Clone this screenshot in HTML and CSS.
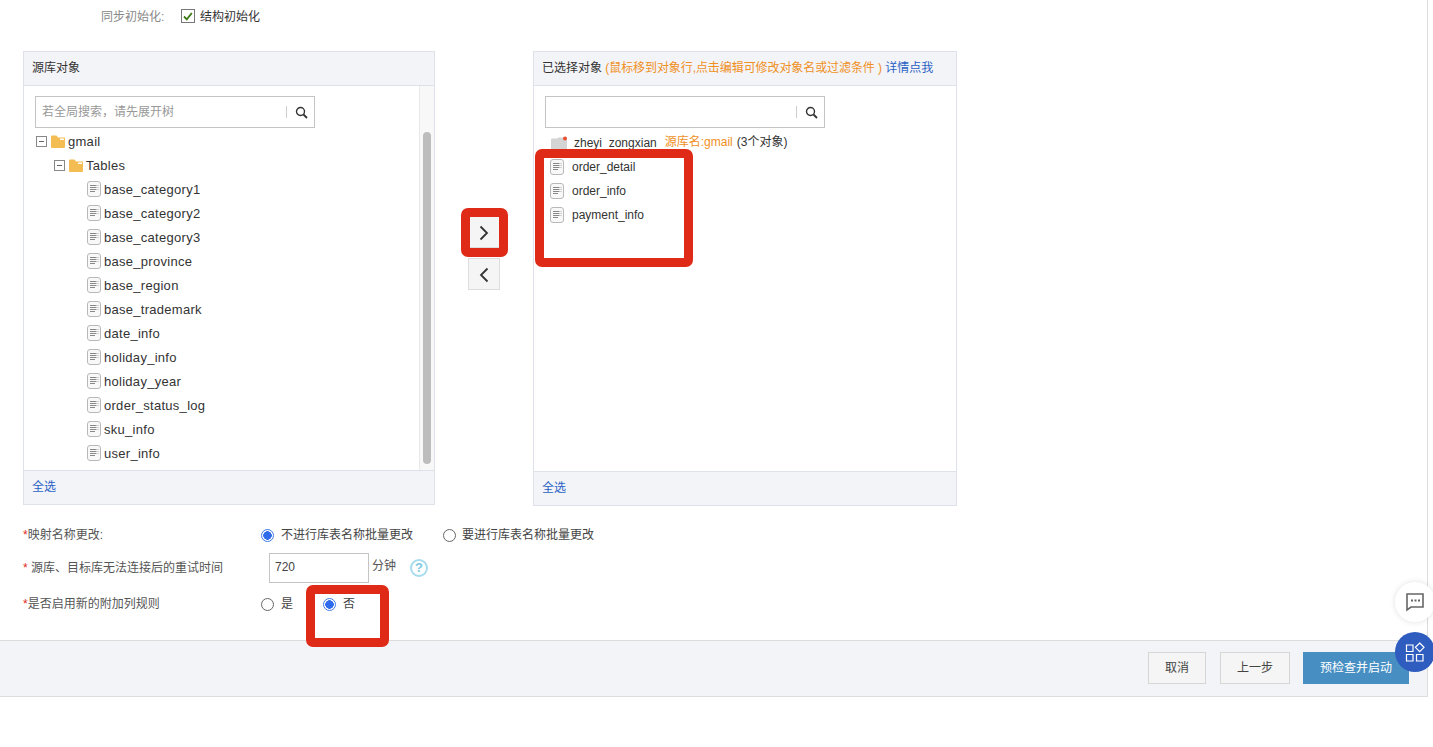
FILE: index.html
```html
<!DOCTYPE html>
<html lang="zh-CN">
<head>
  <meta charset="UTF-8">
  <title>同步任务配置</title>
  <link rel="stylesheet" href="styles.css">
</head>
<body>

  <svg class="defs" width="0" height="0">
    <symbol id="i-file" viewBox="0 0 14 16">
      <rect x="0.5" y="0.5" width="13" height="15" rx="2.5" fill="#f8f8f8" stroke="#b8b8b8"/>
      <path d="M3 4.500h6.500M3 6.500h6.500M3 8.500h6.500M3 10.500h5" stroke="#888" stroke-width="1" fill="none"/>
      <path d="M10.500 4.500h1M10.500 6.500h1M10.500 8.500h1" stroke="#aaa" stroke-width="1" fill="none"/>
    </symbol>
    <symbol id="i-folder" viewBox="0 0 14 13">
      <path d="M0 1.500q0-1 1-1h4.500l1.500 2h7v9.500q0 1-1 1h-12q-1 0-1-1z" fill="#f3bd54"/>
      <path d="M9 3.500h4v1.500h-4z" fill="#fff"/>
    </symbol>
    <symbol id="i-search" viewBox="0 0 13 13">
      <circle cx="5.500" cy="5.500" r="4" fill="none" stroke="#333" stroke-width="1.400"/>
      <path d="M8.500 8.500l3.500 3.500" stroke="#333" stroke-width="1.800" fill="none"/>
    </symbol>
  </svg>

  <div class="page">
    <div class="init-row">
      <span class="init-label">同步初始化:</span>
      <span class="checkbox">
        <svg width="12" height="12" viewBox="0 0 12 12"><path d="M2 6.500l2.800 2.800 5-6.300" fill="none" stroke="#3c7a12" stroke-width="1.800"/></svg>
      </span>
      <span class="init-text">结构初始化</span>
    </div>

    <div class="transfer">
      <div class="panel panel-left">
        <div class="panel-head">源库对象</div>
        <div class="panel-body">
          <div class="tree-wrap">
            <div class="search">
              <span class="search-text">若全局搜索，请先展开树</span>
              <span class="search-btn"><svg width="13" height="13"><use href="#i-search"/></svg></span>
            </div>
            <div class="tree">
              <div class="row lvl-1"><span class="toggle"></span><svg class="folder" width="14" height="13"><use href="#i-folder"/></svg>gmail</div>
              <div class="row lvl-2"><span class="toggle"></span><svg class="folder" width="14" height="13"><use href="#i-folder"/></svg>Tables</div>
              <div class="row lvl-3"><svg class="file" width="14" height="16"><use href="#i-file"/></svg>base_category1</div>
              <div class="row lvl-3"><svg class="file" width="14" height="16"><use href="#i-file"/></svg>base_category2</div>
              <div class="row lvl-3"><svg class="file" width="14" height="16"><use href="#i-file"/></svg>base_category3</div>
              <div class="row lvl-3"><svg class="file" width="14" height="16"><use href="#i-file"/></svg>base_province</div>
              <div class="row lvl-3"><svg class="file" width="14" height="16"><use href="#i-file"/></svg>base_region</div>
              <div class="row lvl-3"><svg class="file" width="14" height="16"><use href="#i-file"/></svg>base_trademark</div>
              <div class="row lvl-3"><svg class="file" width="14" height="16"><use href="#i-file"/></svg>date_info</div>
              <div class="row lvl-3"><svg class="file" width="14" height="16"><use href="#i-file"/></svg>holiday_info</div>
              <div class="row lvl-3"><svg class="file" width="14" height="16"><use href="#i-file"/></svg>holiday_year</div>
              <div class="row lvl-3"><svg class="file" width="14" height="16"><use href="#i-file"/></svg>order_status_log</div>
              <div class="row lvl-3"><svg class="file" width="14" height="16"><use href="#i-file"/></svg>sku_info</div>
              <div class="row lvl-3"><svg class="file" width="14" height="16"><use href="#i-file"/></svg>user_info</div>
            </div>
          </div>
          <div class="scroll-track"><div class="scroll-thumb"></div></div>
        </div>
        <div class="panel-foot"><a href="#">全选</a></div>
      </div>

      <div class="move-btns">
        <button class="move-btn" type="button">
          <svg width="10" height="16" viewBox="0 0 10 16"><path d="M1.500 1.500l6.500 6.500-6.500 6.500" fill="none" stroke="#333" stroke-width="1.800"/></svg>
        </button>
        <button class="move-btn" type="button">
          <svg width="10" height="16" viewBox="0 0 10 16"><path d="M8.500 1.500l-6.500 6.500 6.500 6.500" fill="none" stroke="#333" stroke-width="1.800"/></svg>
        </button>
      </div>

      <div class="panel panel-right">
        <div class="panel-head">已选择对象 <span class="orange head-note">(鼠标移到对象行,点击编辑可修改对象名或过滤条件 )</span> <a href="#">详情点我</a></div>
        <div class="panel-body picked">
          <div class="search">
            <span class="search-text"></span>
            <span class="search-btn"><svg width="13" height="13"><use href="#i-search"/></svg></span>
          </div>
          <div class="picked-list">
            <div class="picked-row picked-db">
              <svg class="db-folder" width="17" height="14" viewBox="0 0 17 14">
                <path d="M0 3.500q0-1 1-1h5l1.500-1h8.500v11q0 1-1 1h-14q-1 0-1-1z" fill="#d4d4d4"/>
                <circle cx="14" cy="2.500" r="2" fill="#e8502f"/>
              </svg>
              <span class="db-name">zheyi_zongxian</span>
              <span class="orange">源库名:gmail</span>
              <span class="db-count">(3个对象)</span>
            </div>
            <div class="picked-row"><svg class="file" width="14" height="16"><use href="#i-file"/></svg>order_detail</div>
            <div class="picked-row"><svg class="file" width="14" height="16"><use href="#i-file"/></svg>order_info</div>
            <div class="picked-row"><svg class="file" width="14" height="16"><use href="#i-file"/></svg>payment_info</div>
          </div>
        </div>
        <div class="panel-foot"><a href="#">全选</a></div>
      </div>
    </div>

    <div class="options">
      <div class="opt-row opt-map">
        <label class="opt-label"><i>*</i>映射名称更改:</label>
        <label class="radio radio-a"><input type="radio" name="rename" checked>不进行库表名称批量更改</label>
        <label class="radio radio-b"><input type="radio" name="rename">要进行库表名称批量更改</label>
      </div>
      <div class="opt-row opt-retry">
        <label class="opt-label"><i>*</i> 源库、目标库无法连接后的重试时间</label>
        <input class="retry-input" type="text" value="720">
        <span class="unit">分钟</span>
        <span class="help">?</span>
      </div>
      <div class="opt-row opt-extra">
        <label class="opt-label"><i>*</i>是否启用新的附加列规则</label>
        <label class="radio radio-yes"><input type="radio" name="extra">是</label>
        <label class="radio"><input type="radio" name="extra" checked>否</label>
      </div>
    </div>

    <div class="footer">
      <button class="btn" type="button">取消</button>
      <button class="btn btn-prev" type="button">上一步</button>
      <button class="btn btn-primary" type="button">预检查并启动</button>
    </div>

    <div class="mark mark-btn"></div>
    <div class="mark mark-list"></div>
    <div class="mark mark-radio"></div>
  </div>

  <div class="float float-chat">
    <svg width="20" height="20" viewBox="0 0 20 20">
      <path d="M2 2h16v13h-12l-4 3z" fill="none" stroke="#666" stroke-width="1.600"/>
      <path d="M6 8.500h2M9.500 8.500h2M13 8.500h2" stroke="#666" stroke-width="2" fill="none"/>
    </svg>
  </div>
  <div class="float float-apps">
    <svg width="20" height="20" viewBox="0 0 20 20">
      <path d="M1.500 3h6.500v6.500h-6.500zM1.500 12.500h6.500v6.500h-6.500zM11.500 12.500h6.500v6.500h-6.500zM14.700 1l4.300 4.300-4.300 4.300-4.300-4.300z" fill="none" stroke="#fff" stroke-width="1.200"/>
    </svg>
  </div>

</body>
</html>
```

FILE: styles.css
```css
* {
  box-sizing: border-box;
}
body {
  margin: 0;
  background: #fff;
  color: #333;
  font-family: "Liberation Sans", "Noto Sans CJK SC", sans-serif;
  font-size: 12px;
  overflow: hidden;
}
a {
  color: #2a62c4;
  text-decoration: none;
}
.defs {
  position: absolute;
}
.page {
  position: relative;
  width: 1428px;
  height: 697px;
  border-right: 1px solid #ddd;
}

.init-row {
  height: 51px;
  padding: 9px 0 0 101px;
  display: flex;
  align-items: flex-start;
}
.init-label {
  width: 80px;
  line-height: 17px;
  color: #888;
}
.init-text {
  margin-left: 5px;
  line-height: 17px;
}
.checkbox {
  width: 14px;
  height: 14px;
  border: 1px solid #777;
  display: flex;
  align-items: center;
  justify-content: center;
}

.transfer {
  display: flex;
  align-items: flex-start;
  padding-left: 23px;
}
.panel {
  border: 1px solid #dfe1ea;
  display: flex;
  flex-direction: column;
}
.panel-left {
  width: 412px;
  height: 454px;
}
.panel-right {
  width: 424px;
  height: 455px;
}
.panel-head {
  height: 34px;
  line-height: 32px;
  padding-left: 8px;
  background: #f3f4f8;
  border-bottom: 1px solid #dfe1ea;
  white-space: nowrap;
}
.head-note {
  letter-spacing: -.08px;
}
.panel-body {
  flex: 1;
  display: flex;
  min-height: 0;
}
.panel-foot {
  height: 34px;
  line-height: 32px;
  padding-left: 8px;
  background: #f3f4f8;
  border-top: 1px solid #dfe1ea;
}
.tree-wrap {
  flex: 1;
  padding: 10px 0 0 11px;
}
.scroll-track {
  width: 15px;
  background: #f8f8f8;
  border-left: 1px solid #e8e8e8;
  padding: 46px 0 0 3px;
}
.scroll-thumb {
  width: 8px;
  height: 332px;
  border-radius: 4px;
  background: #bdbdbd;
}

.search {
  width: 280px;
  height: 32px;
  border: 1px solid #c4c4c4;
  display: flex;
  align-items: center;
}
.search-text {
  flex: 1;
  padding: 0 0 4px 6px;
  color: #999;
}
.search-btn {
  width: 28px;
  height: 12px;
  border-left: 1px solid #ccc;
  display: flex;
  align-items: center;
  padding-left: 8px;
}
.picked {
  display: block;
  padding: 10px 0 0 11px;
}

.tree {
  margin-top: 1px;
}
.row {
  height: 24px;
  display: flex;
  align-items: center;
  font-size: 13px;
  letter-spacing: .28px;
}
.lvl-1 {
  padding-left: 1px;
}
.lvl-2 {
  padding-left: 19px;
}
.lvl-3 {
  padding-left: 52px;
}
.toggle {
  position: relative;
  width: 11px;
  height: 11px;
  border: 1px solid #888;
  margin-right: 4px;
}
.toggle::after {
  content: "";
  position: absolute;
  left: 2px;
  top: 4px;
  width: 5px;
  height: 1px;
  background: #666;
}
.folder {
  margin-right: 3px;
}
.file {
  margin-right: 3px;
  flex: none;
}

.move-btns {
  width: 98px;
  padding-top: 165px;
  display: flex;
  flex-direction: column;
  align-items: center;
  gap: 10px;
}
.move-btn {
  width: 32px;
  height: 32px;
  padding: 2px 0 0;
  background: #f5f5f5;
  border: 1px solid #ddd;
  display: flex;
  align-items: center;
  justify-content: center;
}

.orange {
  color: #f0901e;
}
.picked-list {
  margin-top: 3px;
}
.picked-row {
  height: 24px;
  display: flex;
  align-items: center;
  padding-left: 5px;
}
.picked-row .file {
  margin-right: 8px;
}
.picked-db {
  padding-left: 6px;
  line-height: 14px;
}
.picked-db .orange,
.picked-db .db-count {
  padding-bottom: 3px;
}
.db-folder {
  margin-right: 6px;
}
.db-name {
  margin-right: 8px;
}
.db-count {
  margin-left: 4px;
}

.options {
  padding-left: 23px;
  color: #555;
}
.opt-row {
  display: flex;
  align-items: center;
}
.opt-map {
  height: 28px;
  margin-top: 15px;
}
.opt-retry {
  height: 30px;
  margin-top: 4px;
}
.opt-extra {
  height: 28px;
  margin-top: 7px;
}
.opt-label {
  width: 237px;
  flex: none;
  padding-bottom: 4px;
}
.opt-label i {
  color: #e0281c;
  font-style: normal;
}
.radio {
  display: flex;
  align-items: center;
  padding-bottom: 4px;
  color: #444;
}
.radio input {
  appearance: none;
  width: 13px;
  height: 13px;
  margin: 0 7px -4px 0;
  border: 1px solid #666;
  border-radius: 50%;
  background: #fff;
}
.radio input:checked {
  border-color: #3f7be8;
  background: radial-gradient(circle, #2f6bea 0 4px, #fff 4.500px);
}
.radio-a {
  width: 182px;
  margin-left: 1px;
}
.radio-b input {
  margin-right: 6px;
}
.radio-yes {
  width: 62px;
  margin-left: 1px;
}
.retry-input {
  width: 100px;
  height: 30px;
  margin-left: 9px;
  padding: 0 5px 3px;
  border: 1px solid #c4c4c4;
  font: inherit;
  color: #444;
}
.unit {
  margin: -8px 0 0 3px;
}
.help {
  width: 18px;
  height: 18px;
  margin: -1px 0 0 14px;
  border: 2px solid #a6dcee;
  border-radius: 50%;
  color: #7cc8e2;
  font-size: 13px;
  font-weight: bold;
  line-height: 14px;
  text-align: center;
}

.footer {
  height: 57px;
  margin-top: 22px;
  padding: 11px 18px 0 0;
  background: #f3f4f8;
  border-top: 1px solid #ddd;
  border-bottom: 1px solid #ddd;
  display: flex;
  justify-content: flex-end;
  align-items: flex-start;
  gap: 14px;
}
.btn {
  width: 58px;
  height: 32px;
  padding: 0 0 4px;
  background: #f5f5f5;
  border: 1px solid #d5d5d5;
  color: #444;
  font: inherit;
}
.btn-prev {
  width: 70px;
}
.btn-primary {
  width: 106px;
  margin-left: -1px;
  background: #478fc3;
  border-color: #478fc3;
  color: #fff;
}

/* red marks drawn over the screenshot */
.mark {
  position: absolute;
  border: 9px solid #e02a18;
  border-radius: 7px;
}
.mark-btn {
  left: 461px;
  top: 208px;
  width: 47px;
  height: 49px;
}
.mark-list {
  left: 535px;
  top: 149px;
  width: 158px;
  height: 118px;
}
.mark-radio {
  left: 306px;
  top: 585px;
  width: 83px;
  height: 62px;
}

.float {
  position: fixed;
  left: 1395px;
  width: 40px;
  height: 40px;
  border-radius: 50%;
  display: flex;
  align-items: center;
  justify-content: center;
}
.float-chat {
  top: 582px;
  background: #fff;
  box-shadow: 0 0 6px rgba(0, 0, 0, .12);
}
.float-apps {
  top: 632px;
  background: #2f5cbf;
}
```
